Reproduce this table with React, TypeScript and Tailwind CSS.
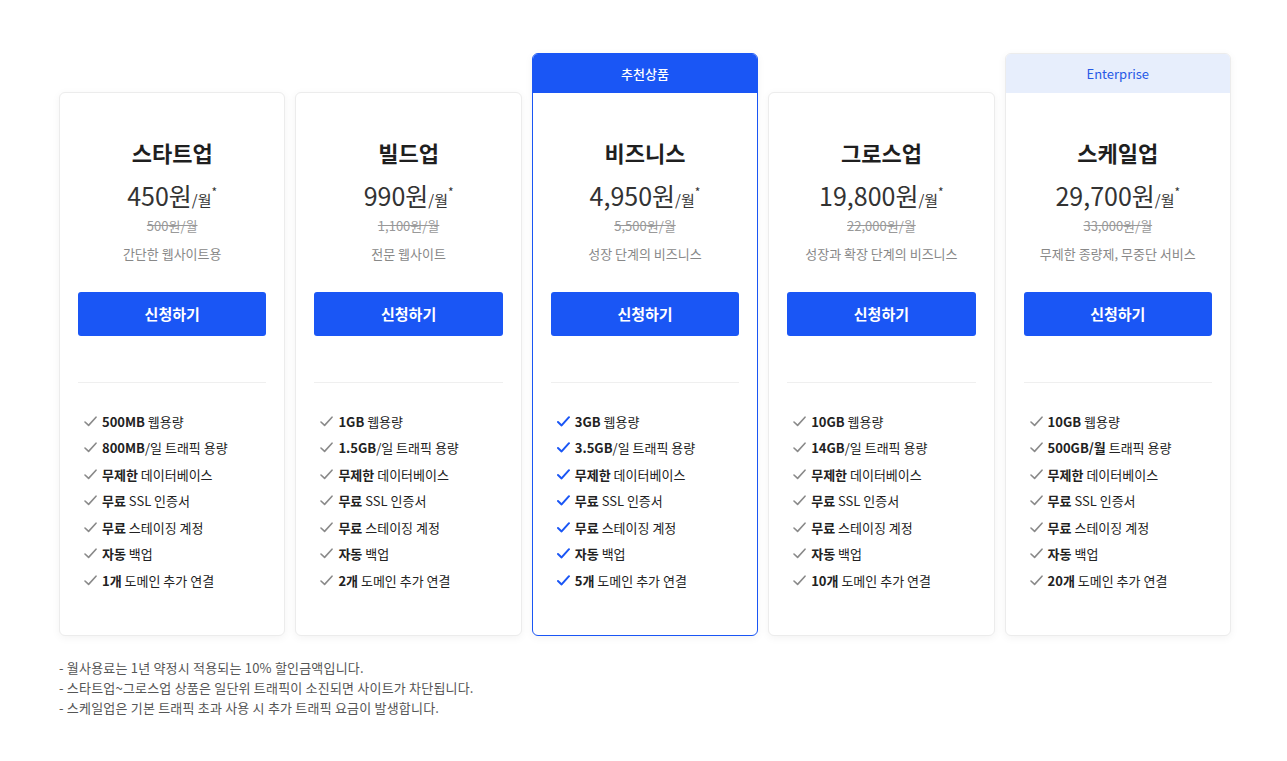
const FONT = { fontFamily: '"Noto Sans CJK KR", "Noto Sans", sans-serif' }

interface Feature {
  strong: string
  rest: string
}

interface Plan {
  name: string
  price: string
  original: string
  desc: string
  badge?: 'recommend' | 'enterprise'
  features: Feature[]
}

const common = (web: Feature, traffic: Feature, domains: string): Feature[] => [
  web,
  traffic,
  { strong: '무제한', rest: ' 데이터베이스' },
  { strong: '무료', rest: ' SSL 인증서' },
  { strong: '무료', rest: ' 스테이징 계정' },
  { strong: '자동', rest: ' 백업' },
  { strong: domains, rest: ' 도메인 추가 연결' },
]

const plans: Plan[] = [
  {
    name: '스타트업',
    price: '450원',
    original: '500원/월',
    desc: '간단한 웹사이트용',
    features: common({ strong: '500MB', rest: ' 웹용량' }, { strong: '800MB', rest: '/일 트래픽 용량' }, '1개'),
  },
  {
    name: '빌드업',
    price: '990원',
    original: '1,100원/월',
    desc: '전문 웹사이트',
    features: common({ strong: '1GB', rest: ' 웹용량' }, { strong: '1.5GB', rest: '/일 트래픽 용량' }, '2개'),
  },
  {
    name: '비즈니스',
    price: '4,950원',
    original: '5,500원/월',
    desc: '성장 단계의 비즈니스',
    badge: 'recommend',
    features: common({ strong: '3GB', rest: ' 웹용량' }, { strong: '3.5GB', rest: '/일 트래픽 용량' }, '5개'),
  },
  {
    name: '그로스업',
    price: '19,800원',
    original: '22,000원/월',
    desc: '성장과 확장 단계의 비즈니스',
    features: common({ strong: '10GB', rest: ' 웹용량' }, { strong: '14GB', rest: '/일 트래픽 용량' }, '10개'),
  },
  {
    name: '스케일업',
    price: '29,700원',
    original: '33,000원/월',
    desc: '무제한 종량제, 무중단 서비스',
    badge: 'enterprise',
    features: common({ strong: '10GB', rest: ' 웹용량' }, { strong: '500GB/월', rest: ' 트래픽 용량' }, '20개'),
  },
]

function Check({ blue }: { blue: boolean }) {
  return (
    <svg width="13" height="11" viewBox="0 0 13 11" className="shrink-0">
      <path
        d="M1 6 L4.6 9.4 L12 1.2"
        fill="none"
        stroke={blue ? '#1a56f5' : '#8a8a8a'}
        strokeWidth={blue ? 2 : 1.6}
        strokeLinecap="round"
        strokeLinejoin="round"
      />
    </svg>
  )
}

function PlanCard({ plan }: { plan: Plan }) {
  const recommended = plan.badge === 'recommend'
  return (
    <div
      className={
        'flex flex-col overflow-hidden rounded-[6px] border bg-white shadow-[0_2px_8px_rgba(0,0,0,0.05)] ' +
        (plan.badge ? '' : 'mt-[39px] ') +
        (recommended ? 'border-[#1a56f5]' : 'border-[#ececec]')
      }
    >
      {/* Badge */}
      {plan.badge === 'recommend' && (
        <div className="flex h-[39px] items-center justify-center bg-[#1a56f5] text-[13px] font-medium text-white">
          추천상품
        </div>
      )}
      {plan.badge === 'enterprise' && (
        <div className="flex h-[39px] items-center justify-center bg-[#e7eefc] text-[13px] text-[#2659e6]">
          Enterprise
        </div>
      )}

      <div className="flex flex-col px-[18px] pt-[44px] pb-[41px]">
        <h3 className="text-center text-[22px] font-bold leading-[30px] text-[#1f1f1f]">{plan.name}</h3>
        <div className="mt-[11px] flex h-[34px] items-baseline justify-center text-[#333]">
          <span className="text-[25px] leading-[34px]">{plan.price}</span>
          <span className="text-[15px] leading-[34px]">/월</span>
          <span className="relative -top-[9px] text-[12px] leading-none">*</span>
        </div>
        <div className="mt-[4px] text-center text-[13px] leading-[20px] text-[#999] line-through">{plan.original}</div>
        <div className="mt-[8px] text-center text-[13px] leading-[20px] text-[#888]">{plan.desc}</div>

        <button className="mt-[28px] h-[44px] rounded-[3px] bg-[#1a56f5] text-[15px] font-bold text-white">
          신청하기
        </button>

        <div className="mt-[46px] h-px bg-[#efefef]" />

        <ul className="mt-[25px] flex flex-col pl-[6px]">
          {plan.features.map((f, i) => (
            <li key={i} className="flex h-[26.5px] items-center gap-[5px] text-[13px] text-[#222]">
              <Check blue={recommended} />
              <span>
                <b className="font-bold">{f.strong}</b>
                {f.rest}
              </span>
            </li>
          ))}
        </ul>
      </div>
    </div>
  )
}

export default function App() {
  return (
    <div className="min-h-screen bg-white pt-[53px]" style={FONT}>
      <div className="ml-[59px] w-[1172px]">
        <div className="grid grid-cols-5 items-start gap-[10px]">
          {plans.map((p) => (
            <PlanCard key={p.name} plan={p} />
          ))}
        </div>

        {/* Notes */}
        <ul className="mt-[22px] text-[13px] leading-[20px] tracking-[0.2px] text-[#555]">
          <li>- 월사용료는 1년 약정시 적용되는 10% 할인금액입니다.</li>
          <li>- 스타트업~그로스업 상품은 일단위 트래픽이 소진되면 사이트가 차단됩니다.</li>
          <li>- 스케일업은 기본 트래픽 초과 사용 시 추가 트래픽 요금이 발생합니다.</li>
        </ul>
      </div>
    </div>
  )
}
